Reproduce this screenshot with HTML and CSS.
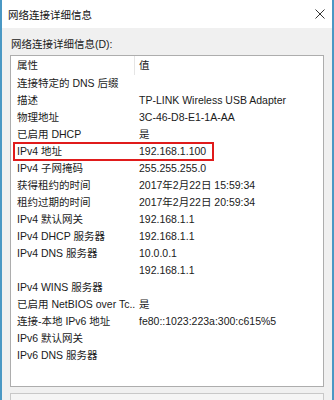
FILE: index.html
```html
<!DOCTYPE html>
<html lang="zh">
<head>
    <meta charset="UTF-8">
    <title>网络连接详细信息</title>
    <link rel="stylesheet" href="styles.css">
</head>
<body>
    <div class="window">
        <div class="title-bar">
            <span class="title">网络连接详细信息</span>
            <span class="close">
                <svg width="10" height="10" viewBox="0 0 10 10"><path d="M0.5 0.5L9.5 9.5M9.5 0.5L0.5 9.5" stroke="#333" stroke-width="1" fill="none"/></svg>
            </span>
        </div>
        <div class="content">
            <div class="group-label">网络连接详细信息(D):</div>
            <div class="list-box">
                <div class="list-header">
                    <div class="col-name">属性</div>
                    <div class="col-value">值</div>
                </div>
                <div class="row"><div class="col-name">连接特定的 DNS 后缀</div><div class="col-value"></div></div>
                <div class="row"><div class="col-name">描述</div><div class="col-value">TP-LINK Wireless USB Adapter</div></div>
                <div class="row"><div class="col-name">物理地址</div><div class="col-value">3C-46-D8-E1-1A-AA</div></div>
                <div class="row"><div class="col-name">已启用 DHCP</div><div class="col-value">是</div></div>
                <div class="row highlight"><div class="col-name">IPv4 地址</div><div class="col-value">192.168.1.100</div></div>
                <div class="row"><div class="col-name">IPv4 子网掩码</div><div class="col-value">255.255.255.0</div></div>
                <div class="row"><div class="col-name">获得租约的时间</div><div class="col-value">2017年2月22日 15:59:34</div></div>
                <div class="row"><div class="col-name">租约过期的时间</div><div class="col-value">2017年2月22日 20:59:34</div></div>
                <div class="row"><div class="col-name">IPv4 默认网关</div><div class="col-value">192.168.1.1</div></div>
                <div class="row"><div class="col-name">IPv4 DHCP 服务器</div><div class="col-value">192.168.1.1</div></div>
                <div class="row"><div class="col-name">IPv4 DNS 服务器</div><div class="col-value">10.0.0.1</div></div>
                <div class="row"><div class="col-name"></div><div class="col-value">192.168.1.1</div></div>
                <div class="row"><div class="col-name">IPv4 WINS 服务器</div><div class="col-value"></div></div>
                <div class="row"><div class="col-name">已启用 NetBIOS over Tc...</div><div class="col-value">是</div></div>
                <div class="row"><div class="col-name">连接-本地 IPv6 地址</div><div class="col-value">fe80::1023:223a:300:c615%5</div></div>
                <div class="row"><div class="col-name">IPv6 默认网关</div><div class="col-value"></div></div>
                <div class="row"><div class="col-name">IPv6 DNS 服务器</div><div class="col-value"></div></div>
            </div>
            <div class="bottom-box"></div>
        </div>
    </div>
</body>
</html>
```

FILE: styles.css
```css
* {
    margin: 0;
    padding: 0;
    box-sizing: border-box;
}

body {
    font-family: "Liberation Sans", "Noto Sans CJK SC", sans-serif;
    font-size: 10.5px;
    color: #1a1a1a;
    background: #f0f0f0;
    width: 334px;
    height: 400px;
    overflow: hidden;
}

.window {
    height: 400px;
    border-left: 2px solid #4a98c4;
    border-right: 2px solid #4a98c4;
    background: #f0f0f0;
}

.title-bar {
    height: 28px;
    background: #fff;
    display: flex;
    align-items: center;
    justify-content: space-between;
    padding: 0 7px 0 6px;
}

.title {
    font-size: 10.5px;
    color: #111;
}

.close {
    display: flex;
    align-items: center;
}

.content {
    padding: 8px 8px 0 8px;
}

.group-label {
    height: 19px;
    line-height: 17px;
    padding-left: 1px;
}

.list-box {
    height: 332px;
    background: #fff;
    border: 1px solid #adadad;
    padding-left: 3px;
}

.list-header,
.row {
    display: flex;
    height: 17px;
    line-height: 17px;
    white-space: nowrap;
}

.list-header {
    height: 19px;
    line-height: 18px;
}

.list-header .col-name {
    border-right: 1px solid #e5e5e5;
}

.col-name {
    width: 121px;
    flex-shrink: 0;
    padding-left: 3px;
    overflow: hidden;
}

.col-value {
    padding-left: 4px;
}

.highlight {
    outline: 2.5px solid #e01b1b;
    outline-offset: -1px;
    width: 199px;
}

.bottom-box {
    margin-top: 6px;
    height: 20px;
    border: 1px solid #c8c8c8;
    background: #f5f5f5;
}
```
